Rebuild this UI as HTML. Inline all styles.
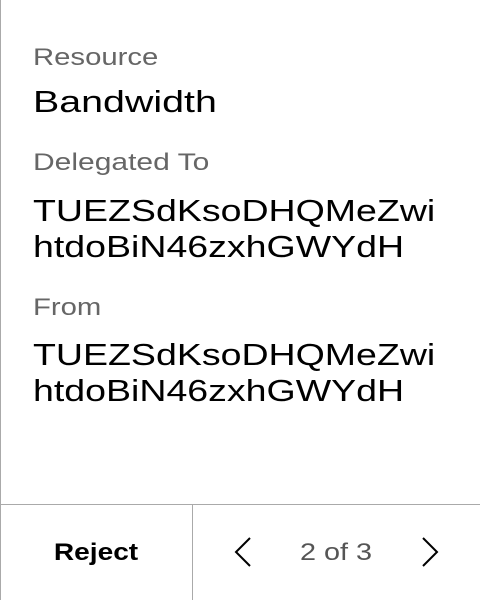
<!DOCTYPE html>
<html><head><style>
html,body{margin:0;padding:0;width:480px;height:600px;background:#fff;overflow:hidden;font-family:"Liberation Sans",sans-serif}
.l{position:absolute;left:0;top:0;width:1px;height:600px;background:#aaa}
.t{position:absolute;left:33px;white-space:nowrap;line-height:normal;transform-origin:0 0}
.lab{font-size:24px;color:#666;transform:scaleX(1.22)}
.val{font-size:31px;color:#000;line-height:36px;transform:scaleX(1.21)}
.bar{position:absolute;left:0;top:504px;width:480px;height:1px;background:#aaa}
.div{position:absolute;left:192px;top:504px;width:1px;height:96px;background:#aaa}
</style></head><body>
<div class="l"></div>
<div class="t lab" style="top:44px">Resource</div>
<div class="t val" style="top:84px;transform:scaleX(1.27)">Bandwidth</div>
<div class="t lab" style="top:149px;transform:scaleX(1.25)">Delegated To</div>
<div class="t val" style="top:193px">TUEZSdKsoDHQMeZwi<br>htdoBiN46zxhGWYdH</div>
<div class="t lab" style="top:294px">From</div>
<div class="t val" style="top:337px">TUEZSdKsoDHQMeZwi<br>htdoBiN46zxhGWYdH</div>
<div class="bar"></div><div class="div"></div>
<div style="position:absolute;left:0;width:192px;top:539px;text-align:center;font-size:24px;font-weight:bold"><span style="display:inline-block;transform:scaleX(1.17)">Reject</span></div>
<div style="position:absolute;left:236px;width:200px;top:539px;text-align:center;font-size:24px;color:#555"><span style="display:inline-block;transform:scaleX(1.2)">2 of 3</span></div>
<svg style="position:absolute;left:0;top:0" width="480" height="600">
<path d="M250 538 L236 552 L250 566" fill="none" stroke="#000" stroke-width="2"/>
<path d="M423 538 L437 552 L423 566" fill="none" stroke="#000" stroke-width="2"/>
</svg>
</body></html>
